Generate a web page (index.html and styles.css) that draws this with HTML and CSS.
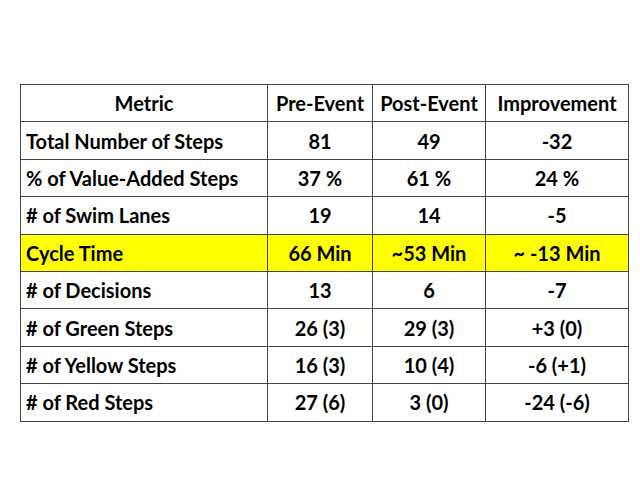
FILE: index.html
```html
<!DOCTYPE html>
<html>
<head>
<meta charset="utf-8">
<link rel="stylesheet" href="styles.css">
</head>
<body>
<div class="slide">
<table class="metrics">
<colgroup>
<col class="c1"><col class="c2"><col class="c3"><col class="c4">
</colgroup>
<thead>
<tr><th>Metric</th><th>Pre-Event</th><th>Post-Event</th><th>Improvement</th></tr>
</thead>
<tbody>
<tr><td class="label">Total Number of Steps</td><td>81</td><td>49</td><td>-32</td></tr>
<tr><td class="label">% of Value-Added Steps</td><td>37 %</td><td>61 %</td><td>24 %</td></tr>
<tr><td class="label"># of Swim Lanes</td><td>19</td><td>14</td><td>-5</td></tr>
<tr class="hl"><td class="label">Cycle Time</td><td>66 Min</td><td>~53 Min</td><td>~ -13 Min</td></tr>
<tr><td class="label"># of Decisions</td><td>13</td><td>6</td><td>-7</td></tr>
<tr><td class="label"># of Green Steps</td><td>26 (3)</td><td>29 (3)</td><td>+3 (0)</td></tr>
<tr><td class="label"># of Yellow Steps</td><td>16 (3)</td><td>10 (4)</td><td>-6 (+1)</td></tr>
<tr><td class="label"># of Red Steps</td><td>27 (6)</td><td>3 (0)</td><td>-24 (-6)</td></tr>
</tbody>
</table>
</div>
</body>
</html>
```

FILE: styles.css
```css
html, body {
  margin: 0;
  padding: 0;
  background: #fff;
}
.slide {
  width: 640px;
  height: 480px;
  padding: 84px 0 0 20px;
  box-sizing: border-box;
}
.metrics {
  border-collapse: collapse;
  table-layout: fixed;
  width: 608px;
  font-family: Lato, "Open Sans", sans-serif;
  font-weight: 700;
  font-size: 20px;
  color: #000;
}
.c1 { width: 247px; }
.c2 { width: 105px; }
.c3 { width: 113px; }
.c4 { width: 143px; }
.metrics th, .metrics td {
  border: 1px solid #444;
  height: 37.4px;
  padding: 0 4px;
  text-align: center;
  vertical-align: middle;
  font-weight: 700;
  white-space: nowrap;
  box-sizing: border-box;
}
.metrics td.label {
  text-align: left;
  padding-left: 5px;
}
.metrics tr.hl td {
  background: #ffff00;
}
```
